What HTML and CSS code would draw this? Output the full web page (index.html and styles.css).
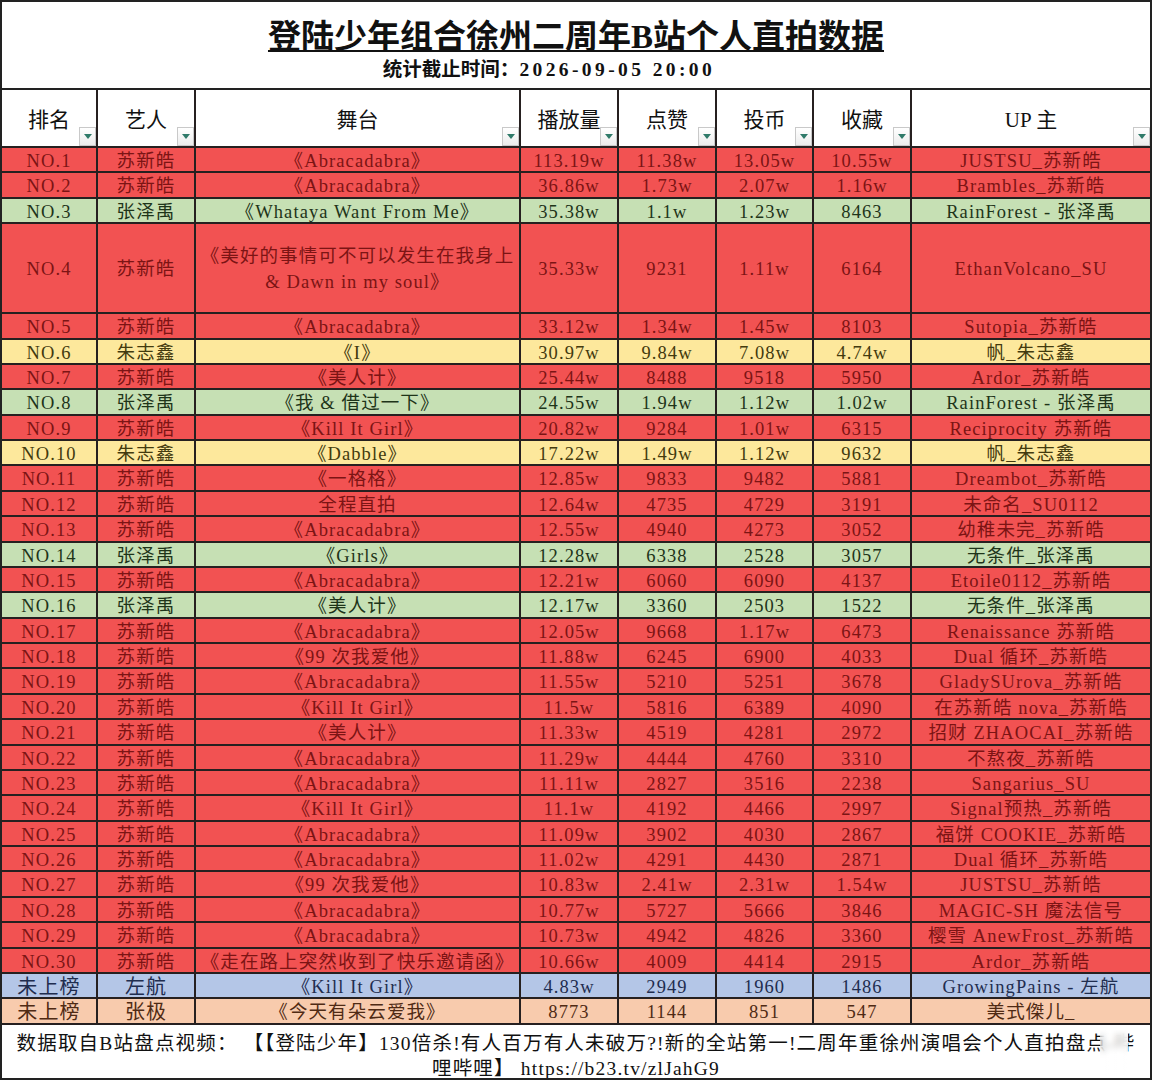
FILE: index.html
```html
<!DOCTYPE html>
<html lang="zh-CN">
<head>
<meta charset="utf-8">
<title>登陆少年组合徐州二周年B站个人直拍数据</title>
<link rel="stylesheet" href="styles.css">
</head>
<body>
<div class="sheet">
  <header class="banner">
    <h1 class="title">登陆少年组合徐州二周年B站个人直拍数据</h1>
    <p class="subtitle">统计截止时间：<span class="date">2026-09-05 20:00</span></p>
  </header>

  <div class="row head">
    <div class="cell">排名<i class="filter"></i></div>
    <div class="cell">艺人<i class="filter"></i></div>
    <div class="cell">舞台<i class="filter"></i></div>
    <div class="cell">播放量<i class="filter"></i></div>
    <div class="cell">点赞<i class="filter"></i></div>
    <div class="cell">投币<i class="filter"></i></div>
    <div class="cell">收藏<i class="filter"></i></div>
    <div class="cell">UP 主<i class="filter"></i></div>
  </div>

  <div class="row red"><div class="cell">NO.1</div><div class="cell">苏新皓</div><div class="cell">《Abracadabra》</div><div class="cell">113.19w</div><div class="cell">11.38w</div><div class="cell">13.05w</div><div class="cell">10.55w</div><div class="cell">JUSTSU_苏新皓</div></div>
  <div class="row red"><div class="cell">NO.2</div><div class="cell">苏新皓</div><div class="cell">《Abracadabra》</div><div class="cell">36.86w</div><div class="cell">1.73w</div><div class="cell">2.07w</div><div class="cell">1.16w</div><div class="cell">Brambles_苏新皓</div></div>
  <div class="row green"><div class="cell">NO.3</div><div class="cell">张泽禹</div><div class="cell">《Whataya Want From Me》</div><div class="cell">35.38w</div><div class="cell">1.1w</div><div class="cell">1.23w</div><div class="cell">8463</div><div class="cell">RainForest - 张泽禹</div></div>
  <div class="row red tall"><div class="cell">NO.4</div><div class="cell">苏新皓</div><div class="cell wrap">《美好的事情可不可以发生在我身上<br>&amp; Dawn in my soul》</div><div class="cell">35.33w</div><div class="cell">9231</div><div class="cell">1.11w</div><div class="cell">6164</div><div class="cell">EthanVolcano_SU</div></div>
  <div class="row red"><div class="cell">NO.5</div><div class="cell">苏新皓</div><div class="cell">《Abracadabra》</div><div class="cell">33.12w</div><div class="cell">1.34w</div><div class="cell">1.45w</div><div class="cell">8103</div><div class="cell">Sutopia_苏新皓</div></div>
  <div class="row yellow"><div class="cell">NO.6</div><div class="cell">朱志鑫</div><div class="cell">《I》</div><div class="cell">30.97w</div><div class="cell">9.84w</div><div class="cell">7.08w</div><div class="cell">4.74w</div><div class="cell">帆_朱志鑫</div></div>
  <div class="row red"><div class="cell">NO.7</div><div class="cell">苏新皓</div><div class="cell">《美人计》</div><div class="cell">25.44w</div><div class="cell">8488</div><div class="cell">9518</div><div class="cell">5950</div><div class="cell">Ardor_苏新皓</div></div>
  <div class="row green"><div class="cell">NO.8</div><div class="cell">张泽禹</div><div class="cell">《我 &amp; 借过一下》</div><div class="cell">24.55w</div><div class="cell">1.94w</div><div class="cell">1.12w</div><div class="cell">1.02w</div><div class="cell">RainForest - 张泽禹</div></div>
  <div class="row red"><div class="cell">NO.9</div><div class="cell">苏新皓</div><div class="cell">《Kill It Girl》</div><div class="cell">20.82w</div><div class="cell">9284</div><div class="cell">1.01w</div><div class="cell">6315</div><div class="cell">Reciprocity 苏新皓</div></div>
  <div class="row yellow"><div class="cell">NO.10</div><div class="cell">朱志鑫</div><div class="cell">《Dabble》</div><div class="cell">17.22w</div><div class="cell">1.49w</div><div class="cell">1.12w</div><div class="cell">9632</div><div class="cell">帆_朱志鑫</div></div>
  <div class="row red"><div class="cell">NO.11</div><div class="cell">苏新皓</div><div class="cell">《一格格》</div><div class="cell">12.85w</div><div class="cell">9833</div><div class="cell">9482</div><div class="cell">5881</div><div class="cell">Dreambot_苏新皓</div></div>
  <div class="row red"><div class="cell">NO.12</div><div class="cell">苏新皓</div><div class="cell">全程直拍</div><div class="cell">12.64w</div><div class="cell">4735</div><div class="cell">4729</div><div class="cell">3191</div><div class="cell">未命名_SU0112</div></div>
  <div class="row red"><div class="cell">NO.13</div><div class="cell">苏新皓</div><div class="cell">《Abracadabra》</div><div class="cell">12.55w</div><div class="cell">4940</div><div class="cell">4273</div><div class="cell">3052</div><div class="cell">幼稚未完_苏新皓</div></div>
  <div class="row green"><div class="cell">NO.14</div><div class="cell">张泽禹</div><div class="cell">《Girls》</div><div class="cell">12.28w</div><div class="cell">6338</div><div class="cell">2528</div><div class="cell">3057</div><div class="cell">无条件_张泽禹</div></div>
  <div class="row red"><div class="cell">NO.15</div><div class="cell">苏新皓</div><div class="cell">《Abracadabra》</div><div class="cell">12.21w</div><div class="cell">6060</div><div class="cell">6090</div><div class="cell">4137</div><div class="cell">Etoile0112_苏新皓</div></div>
  <div class="row green"><div class="cell">NO.16</div><div class="cell">张泽禹</div><div class="cell">《美人计》</div><div class="cell">12.17w</div><div class="cell">3360</div><div class="cell">2503</div><div class="cell">1522</div><div class="cell">无条件_张泽禹</div></div>
  <div class="row red"><div class="cell">NO.17</div><div class="cell">苏新皓</div><div class="cell">《Abracadabra》</div><div class="cell">12.05w</div><div class="cell">9668</div><div class="cell">1.17w</div><div class="cell">6473</div><div class="cell">Renaissance 苏新皓</div></div>
  <div class="row red"><div class="cell">NO.18</div><div class="cell">苏新皓</div><div class="cell">《99 次我爱他》</div><div class="cell">11.88w</div><div class="cell">6245</div><div class="cell">6900</div><div class="cell">4033</div><div class="cell">Dual 循环_苏新皓</div></div>
  <div class="row red"><div class="cell">NO.19</div><div class="cell">苏新皓</div><div class="cell">《Abracadabra》</div><div class="cell">11.55w</div><div class="cell">5210</div><div class="cell">5251</div><div class="cell">3678</div><div class="cell">GladySUrova_苏新皓</div></div>
  <div class="row red"><div class="cell">NO.20</div><div class="cell">苏新皓</div><div class="cell">《Kill It Girl》</div><div class="cell">11.5w</div><div class="cell">5816</div><div class="cell">6389</div><div class="cell">4090</div><div class="cell">在苏新皓 nova_苏新皓</div></div>
  <div class="row red"><div class="cell">NO.21</div><div class="cell">苏新皓</div><div class="cell">《美人计》</div><div class="cell">11.33w</div><div class="cell">4519</div><div class="cell">4281</div><div class="cell">2972</div><div class="cell">招财 ZHAOCAI_苏新皓</div></div>
  <div class="row red"><div class="cell">NO.22</div><div class="cell">苏新皓</div><div class="cell">《Abracadabra》</div><div class="cell">11.29w</div><div class="cell">4444</div><div class="cell">4760</div><div class="cell">3310</div><div class="cell">不熬夜_苏新皓</div></div>
  <div class="row red"><div class="cell">NO.23</div><div class="cell">苏新皓</div><div class="cell">《Abracadabra》</div><div class="cell">11.11w</div><div class="cell">2827</div><div class="cell">3516</div><div class="cell">2238</div><div class="cell">Sangarius_SU</div></div>
  <div class="row red"><div class="cell">NO.24</div><div class="cell">苏新皓</div><div class="cell">《Kill It Girl》</div><div class="cell">11.1w</div><div class="cell">4192</div><div class="cell">4466</div><div class="cell">2997</div><div class="cell">Signal预热_苏新皓</div></div>
  <div class="row red"><div class="cell">NO.25</div><div class="cell">苏新皓</div><div class="cell">《Abracadabra》</div><div class="cell">11.09w</div><div class="cell">3902</div><div class="cell">4030</div><div class="cell">2867</div><div class="cell">福饼 COOKIE_苏新皓</div></div>
  <div class="row red"><div class="cell">NO.26</div><div class="cell">苏新皓</div><div class="cell">《Abracadabra》</div><div class="cell">11.02w</div><div class="cell">4291</div><div class="cell">4430</div><div class="cell">2871</div><div class="cell">Dual 循环_苏新皓</div></div>
  <div class="row red"><div class="cell">NO.27</div><div class="cell">苏新皓</div><div class="cell">《99 次我爱他》</div><div class="cell">10.83w</div><div class="cell">2.41w</div><div class="cell">2.31w</div><div class="cell">1.54w</div><div class="cell">JUSTSU_苏新皓</div></div>
  <div class="row red"><div class="cell">NO.28</div><div class="cell">苏新皓</div><div class="cell">《Abracadabra》</div><div class="cell">10.77w</div><div class="cell">5727</div><div class="cell">5666</div><div class="cell">3846</div><div class="cell">MAGIC-SH 魔法信号</div></div>
  <div class="row red"><div class="cell">NO.29</div><div class="cell">苏新皓</div><div class="cell">《Abracadabra》</div><div class="cell">10.73w</div><div class="cell">4942</div><div class="cell">4826</div><div class="cell">3360</div><div class="cell">樱雪 AnewFrost_苏新皓</div></div>
  <div class="row red"><div class="cell">NO.30</div><div class="cell">苏新皓</div><div class="cell">《走在路上突然收到了快乐邀请函》</div><div class="cell">10.66w</div><div class="cell">4009</div><div class="cell">4414</div><div class="cell">2915</div><div class="cell">Ardor_苏新皓</div></div>
  <div class="row blue"><div class="cell big">未上榜</div><div class="cell big">左航</div><div class="cell">《Kill It Girl》</div><div class="cell">4.83w</div><div class="cell">2949</div><div class="cell">1960</div><div class="cell">1486</div><div class="cell">GrowingPains - 左航</div></div>
  <div class="row orange"><div class="cell big">未上榜</div><div class="cell big">张极</div><div class="cell">《今天有朵云爱我》</div><div class="cell">8773</div><div class="cell">1144</div><div class="cell">851</div><div class="cell">547</div><div class="cell">美式傑儿_</div></div>

  <footer class="note">
    <p class="line">数据取自B站盘点视频： 【【登陆少年】130倍杀!有人百万有人未破万?!新的全站第一!二周年重徐州演唱会个人直拍盘点-哔</p>
    <p class="line">哩哔哩】 https://b23.tv/zlJahG9</p>
    <div class="watermark"></div>
  </footer>
</div>
</body>
</html>
```

FILE: styles.css
```css
* {
  box-sizing: border-box;
  margin: 0;
  padding: 0;
}

html, body {
  background: #ffffff;
}

body {
  width: 1153px;
  height: 1080px;
  overflow: hidden;
  font-family: "Liberation Serif", "Noto Sans CJK SC", serif;
  color: #111;
}

.sheet {
  width: 1152px;
  height: 1080px;
  border: 2px solid #222;
  display: flex;
  flex-direction: column;
}

/* ---------- banner ---------- */
.banner {
  height: 88px;
  flex: none;
  border-bottom: 2px solid #222;
  display: flex;
  flex-direction: column;
  align-items: center;
}

.title {
  margin-top: 15px;
  font-size: 33px;
  line-height: 40px;
  font-weight: 700;
  color: #111;
  text-decoration: underline;
  text-decoration-thickness: 2px;
  text-underline-offset: 2px;
}

.subtitle {
  margin-top: 1px;
  margin-left: -54px;
  font-size: 19.5px;
  line-height: 24px;
  font-weight: 700;
  color: #111;
}

.subtitle .date {
  letter-spacing: 3.4px;
}

/* ---------- rows ---------- */
.row {
  display: grid;
  grid-template-columns: 96px 98px 325px 98px 98px 97px 98px 1fr;
  height: 25.38px;
  flex: none;
  border-bottom: 2px solid #262020;
  font-size: 18.5px;
  letter-spacing: 1.1px;
}

.cell {
  position: relative;
  display: flex;
  align-items: center;
  justify-content: center;
  white-space: nowrap;
  border-right: 2px solid #262020;
  line-height: 22px;
  padding-top: 2px;
}

.cell:last-child {
  border-right: none;
}

.cell.wrap {
  white-space: normal;
  text-align: center;
  line-height: 26px;
}

.cell.big {
  font-size: 20px;
}

.row.tall {
  height: 90px;
}

.row.head {
  height: 58px;
  background: #ffffff;
  color: #111;
  font-size: 21px;
  letter-spacing: 0;
}

.row.head .cell {
  padding-top: 3px;
}

.filter {
  position: absolute;
  right: 0;
  bottom: 0;
  width: 17px;
  height: 19px;
  border: 1px solid #c9c9c9;
  background: linear-gradient(#ffffff, #ececec);
  display: flex;
  align-items: center;
  justify-content: center;
}

.filter::after {
  content: "";
  width: 0;
  height: 0;
  border-left: 4px solid transparent;
  border-right: 4px solid transparent;
  border-top: 5px solid #2f7a69;
}

.red {
  background: #f25252;
  color: #7c1414;
}

.green {
  background: #c6e0b4;
  color: #1e3419;
}

.yellow {
  background: #fde89c;
  color: #433a0e;
}

.blue {
  background: #b4c6e7;
  color: #1f2d4f;
}

.orange {
  background: #f8cbad;
  color: #4f2a14;
}

/* ---------- footer note ---------- */
.note {
  position: relative;
  flex: 1;
  padding-top: 6px;
  font-size: 19.5px;
  line-height: 25px;
  letter-spacing: 1.2px;
  text-align: center;
  color: #111;
  overflow: hidden;
}

.note .line {
  white-space: nowrap;
}

.watermark {
  position: absolute;
  right: 22px;
  top: 5px;
  width: 28px;
  height: 46px;
  backdrop-filter: blur(3px);
  background: linear-gradient(90deg, rgba(255,255,255,0.4), rgba(255,255,255,0.85));
}
```
